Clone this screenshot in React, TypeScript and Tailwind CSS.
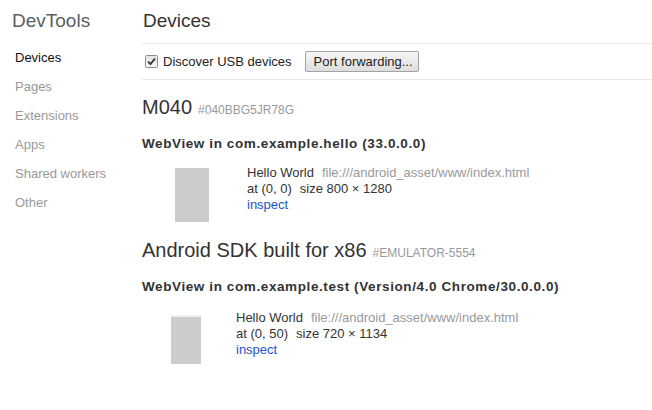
import React from 'react';

const sideItems = ['Devices', 'Pages', 'Extensions', 'Apps', 'Shared workers', 'Other'];

export default function App() {
  return (
    <div className="flex h-[410px] w-[652px] bg-white text-[13px] text-[#333] font-['Liberation_Sans',Arial,sans-serif]">
      <Sidebar />
      <div className="flex-1 flex flex-col">
        <div className="pt-[9px] pb-[10px] pl-px text-[19px] leading-[24px] text-[#333] border-b border-[#ebebeb]">
          Devices
        </div>
        <div className="h-[36px] flex items-center pl-[3px] border-b border-[#ebebeb]">
          <CheckBox />
          <span className="ml-[5px] text-[#222]">Discover USB devices</span>
          <button className="ml-[13px] h-[21px] w-[114px] pl-[8px] text-left border border-[#a3a3a3] rounded-[2px] bg-gradient-to-b from-[#f6f6f6] to-[#dedede] text-[#222] leading-[19px]">
            Port forwarding...
          </button>
        </div>

        <Device
          name="M040"
          serial="#040BBG5JR78G"
          title="WebView in com.example.hello (33.0.0.0)"
          at="at (0, 0)"
          size="size 800 × 1280"
          nameTop="mt-[15px]"
          titleTop="mt-[14px]"
          rowTop="mt-[13px]"
          thumb={
            <div className="ml-[33px] mt-[3px] w-[34px] h-[54px] bg-[#cccccc]" />
          }
          textLeft="ml-[38px]"
        />
        <Device
          name="Android SDK built for x86"
          serial="#EMULATOR-5554"
          title="WebView in com.example.test (Version/4.0 Chrome/30.0.0.0)"
          at="at (0, 50)"
          size="size 720 × 1134"
          nameTop="mt-[16px]"
          titleTop="mt-[14px]"
          rowTop="mt-[15px]"
          thumb={
            <div className="ml-[29px] mt-[5px] w-[30px] h-[49px] flex flex-col">
              <div className="h-[2px] bg-[#efefef]" />
              <div className="flex-1 bg-[#cccccc]" />
            </div>
          }
          textLeft="ml-[35px]"
        />
      </div>
    </div>
  );
}

function Sidebar() {
  return (
    <div className="w-[142px] shrink-0">
      <div className="pt-[9px] pl-[12px] text-[19px] leading-[24px] text-[#5a5f63]">DevTools</div>
      <ul className="mt-[10px] pl-[15px]">
        {sideItems.map((item, i) => (
          <li key={item} className={`leading-[29px] ${i === 0 ? 'text-[#111]' : 'text-[#999]'}`}>
            {item}
          </li>
        ))}
      </ul>
    </div>
  );
}

function CheckBox() {
  return (
    <svg width="13" height="13" viewBox="0 0 13 13">
      <defs>
        <linearGradient id="cb" x1="0" y1="0" x2="0" y2="1">
          <stop offset="0" stopColor="#e2e2e2" />
          <stop offset="1" stopColor="#f8f8f8" />
        </linearGradient>
      </defs>
      <rect x="0.5" y="0.5" width="12" height="12" rx="1" fill="url(#cb)" stroke="#8d8d8d" />
      <path d="M3 6.6 L5.4 9 L10 3.6" fill="none" stroke="#3a3a3a" strokeWidth="1.9" />
    </svg>
  );
}

type DeviceProps = {
  name: string;
  serial: string;
  title: string;
  at: string;
  size: string;
  nameTop: string;
  titleTop: string;
  rowTop: string;
  thumb: React.ReactNode;
  textLeft: string;
};

function Device({ name, serial, title, at, size, nameTop, titleTop, rowTop, thumb, textLeft }: DeviceProps) {
  return (
    <div className="flex flex-col">
      <div className={`${nameTop} leading-[24px] whitespace-nowrap`}>
        <span className="text-[20px] text-[#333]">{name}</span>
        <span className="ml-[6px] text-[12px] text-[#999]">{serial}</span>
      </div>
      <div className={`${titleTop} leading-[16px] font-bold text-[13.5px] tracking-[0.6px] text-[#333] whitespace-nowrap`}>
        {title}
      </div>
      <div className={`${rowTop} flex items-start`}>
        {thumb}
        <div className={`${textLeft} leading-[16px]`}>
          <div className="whitespace-nowrap">
            <span className="text-[#333]">Hello World</span>
            <span className="ml-[8px] text-[#999]">file:///android_asset/www/index.html</span>
          </div>
          <div className="whitespace-nowrap">
            <span>{at}</span>
            <span className="ml-[8px]">{size}</span>
          </div>
          <div className="text-[#1d55c4]">inspect</div>
        </div>
      </div>
    </div>
  );
}
